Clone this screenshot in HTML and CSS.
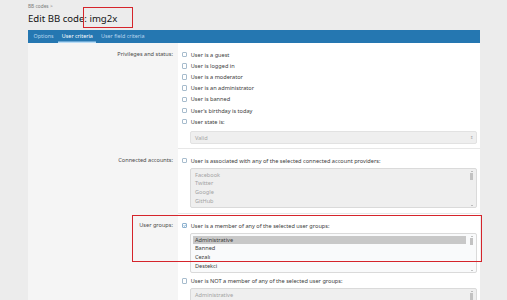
FILE: index.html
```html
<!DOCTYPE html>
<html lang="en">
<head>
  <meta charset="UTF-8">
  <title>Edit BB code: img2x</title>
  <link rel="stylesheet" href="styles.css">
</head>
<body>
  <div class="page">
    <div class="crumb">BB codes &gt;</div>
    <h1 class="title">Edit BB code: img2x</h1>

    <div class="tabs">
      <span class="tab">Options</span>
      <span class="tab tab_active">User criteria</span>
      <span class="tab">User field criteria</span>
    </div>

    <div class="form">
      <!-- privileges -->
      <div class="form_row">
        <div class="form_label">Privileges and status:</div>
        <div class="form_input">
          <label class="check"><span class="box"></span>User is a guest</label>
          <label class="check"><span class="box"></span>User is logged in</label>
          <label class="check"><span class="box"></span>User is a moderator</label>
          <label class="check"><span class="box"></span>User is an administrator</label>
          <label class="check"><span class="box"></span>User is banned</label>
          <label class="check"><span class="box"></span>User's birthday is today</label>
          <label class="check"><span class="box"></span>User state is:</label>
          <div class="select">
            <span>Valid</span>
            <span class="select_arrow">&#8661;</span>
          </div>
        </div>
      </div>

      <!-- connected accounts -->
      <div class="form_row">
        <div class="form_label">Connected accounts:</div>
        <div class="form_input">
          <label class="check"><span class="box"></span>User is associated with any of the selected connected account providers:</label>
          <div class="listbox listbox_off">
            <ul class="listbox_items">
              <li>Facebook</li>
              <li>Twitter</li>
              <li>Google</li>
              <li>GitHub</li>
              <li>Linkedin</li>
            </ul>
            <div class="scroll">
              <span class="scroll_up"></span>
              <span class="scroll_thumb"></span>
              <span class="scroll_gap"></span>
              <span class="scroll_down"></span>
            </div>
          </div>
        </div>
      </div>

      <!-- user groups -->
      <div class="form_row">
        <div class="form_label">User groups:</div>
        <div class="form_input">
          <label class="check"><span class="box box_on">
            <svg viewBox="0 0 8 8" width="5" height="5"><path d="M1.5 4.2 L3.3 6 L6.6 2" fill="none" stroke="#2577b1" stroke-width="1.3"/></svg>
          </span>User is a member of any of the selected user groups:</label>
          <div class="listbox">
            <ul class="listbox_items">
              <li class="picked">Administrative</li>
              <li>Banned</li>
              <li>Cezalı</li>
              <li>Destekci</li>
              <li>Moderating</li>
            </ul>
            <div class="scroll">
              <span class="scroll_up"></span>
              <span class="scroll_thumb"></span>
              <span class="scroll_gap"></span>
              <span class="scroll_down"></span>
            </div>
          </div>
          <label class="check"><span class="box"></span>User is NOT a member of any of the selected user groups:</label>
          <div class="listbox listbox_off">
            <ul class="listbox_items">
              <li>Administrative</li>
              <li>Banned</li>
            </ul>
            <div class="scroll">
              <span class="scroll_up"></span>
              <span class="scroll_thumb"></span>
            </div>
          </div>
        </div>
      </div>
    </div>
  </div>

  <!-- red annotation boxes -->
  <div class="mark mark_title"></div>
  <div class="mark mark_groups"></div>
</body>
</html>
```

FILE: styles.css
```css
* {
  box-sizing: border-box;
}
body {
  margin: 0;
  background-color: #ececec;
  font-family: "Noto Sans", "Open Sans", sans-serif;
  color: #141414;
  height: 300px;
  overflow: hidden;
  position: relative;
}
.page {
  width: 452px;
  margin-left: 28px;
  padding-top: 3px;
}
.crumb {
  font-size: 4.8px;
  line-height: 7px;
  color: #7a7a7a;
}
.title {
  margin: 0;
  font-size: 9.6px;
  font-weight: normal;
  line-height: 18px;
  height: 20px;
  color: #141414;
}
.tabs {
  display: flex;
  height: 13px;
  background-color: #2577b1;
  padding-left: 2px;
}
.tab {
  font-size: 5.4px;
  line-height: 13px;
  color: #b9d6ee;
  padding: 0 3.6px;
  margin-right: 1px;
}
.tab_active {
  color: #fff;
  box-shadow: inset 0 -1.5px 0 #b7dcf7;
}
.form {
  background-color: #fff;
}
.form_row {
  display: grid;
  grid-template-columns: 150px 1fr;
}
.form_row + .form_row .form_input {
  border-top: 1px solid #e7e7e7;
}
.form_label {
  background-color: #f5f5f5;
  text-align: right;
  font-size: 5.6px;
  color: #4a4a4a;
  line-height: 11.2px;
  padding: 6px 5px 0 0;
}
.form_row + .form_row .form_label {
  padding-top: 7px;
}
.form_input {
  padding: 6px 3.5px 3px 3.7px;
  font-size: 5.6px;
}
.check {
  display: flex;
  align-items: center;
  height: 11.2px;
  color: #3c3c3c;
}
.box {
  width: 5.5px;
  height: 5.5px;
  border: 0.8px solid #a7bccd;
  border-radius: 1px;
  background-color: #fff;
  margin-right: 3.6px;
  display: flex;
  align-items: center;
  justify-content: center;
}
.box_on {
  border-color: #8db1cf;
}
.select {
  display: flex;
  justify-content: space-between;
  align-items: center;
  height: 12.6px;
  margin: 4px 0 1px 8.3px;
  padding: 0 3px 0 4px;
  background-color: #efefef;
  border: 0.8px solid #e2e2e2;
  border-radius: 2px;
  color: #a5a5a5;
}
.select_arrow {
  font-size: 4px;
  color: #999;
}
.listbox {
  display: flex;
  height: 40px;
  margin: 2px 0 2px 8.3px;
  border: 0.8px solid #dadada;
  border-radius: 2px;
  background-color: #f9fafb;
  overflow: hidden;
}
.listbox_off {
  background-color: #efefef;
  color: #a3a3a3;
}
.listbox_items {
  flex: 1;
  list-style: none;
  margin: 0;
  padding: 1.5px 3px 0 2px;
  overflow: hidden;
}
.listbox_items li {
  line-height: 8.7px;
  padding-left: 2px;
  color: #3a3a3a;
}
.listbox_off .listbox_items li {
  color: #a3a3a3;
}
.picked {
  background-color: #c8c8c8;
}
.scroll {
  width: 6.5px;
  display: flex;
  flex-direction: column;
  align-items: center;
  padding: 2px 1.5px 1px 0;
}
.scroll_up,
.scroll_down {
  width: 0;
  height: 0;
  border-left: 1.2px solid transparent;
  border-right: 1.2px solid transparent;
}
.scroll_up {
  border-bottom: 1.5px solid #8a8a8a;
}
.scroll_down {
  border-top: 1.5px solid #8a8a8a;
}
.scroll_thumb {
  width: 3.5px;
  height: 7px;
  margin-top: 1px;
  background-color: #c2c2c2;
}
.scroll_gap {
  flex: 1;
}
.mark {
  position: absolute;
  border: 1.5px solid #d5242b;
}
.mark_title {
  left: 83px;
  top: 7px;
  width: 50px;
  height: 21px;
}
.mark_groups {
  left: 132px;
  top: 215px;
  width: 350px;
  height: 47px;
}
```
